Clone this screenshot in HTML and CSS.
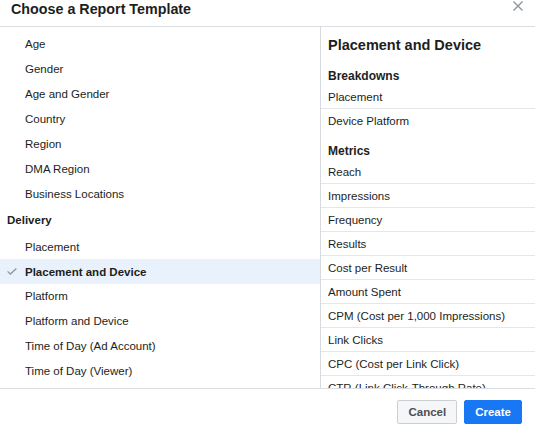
FILE: index.html
```html
<!DOCTYPE html>
<html>
<head>
<meta charset="utf-8">
<link rel="stylesheet" href="styles.css">
</head>
<body>
<div class="dialog">
  <header class="head">
    <h1 class="title">Choose a Report Template</h1>
    <span class="close"><svg width="10" height="10" viewBox="0 0 10 10"><path d="M0.5 0.5L9.5 9.5M9.5 0.5L0.5 9.5" stroke="#8d949e" stroke-width="1.4" fill="none"/></svg></span>
  </header>
  <div class="body">
    <div class="left">
      <div class="item">Age</div>
      <div class="item">Gender</div>
      <div class="item">Age and Gender</div>
      <div class="item">Country</div>
      <div class="item">Region</div>
      <div class="item">DMA Region</div>
      <div class="item">Business Locations</div>
      <div class="group">Delivery</div>
      <div class="item">Placement</div>
      <div class="item selected"><svg class="check" width="10" height="7" viewBox="0 0 10 7"><path d="M0.6 3.4L3.4 6.1L9.4 0.6" stroke="#8d949e" stroke-width="1.3" fill="none"/></svg>Placement and Device</div>
      <div class="item">Platform</div>
      <div class="item">Platform and Device</div>
      <div class="item">Time of Day (Ad Account)</div>
      <div class="item">Time of Day (Viewer)</div>
    </div>
    <div class="right">
      <h2 class="rtitle">Placement and Device</h2>
      <h3 class="sec">Breakdowns</h3>
      <div class="rows">
        <div class="row">Placement</div>
        <div class="row">Device Platform</div>
      </div>
      <h3 class="sec metrics">Metrics</h3>
      <div class="rows">
        <div class="row">Reach</div>
        <div class="row">Impressions</div>
        <div class="row">Frequency</div>
        <div class="row">Results</div>
        <div class="row">Cost per Result</div>
        <div class="row">Amount Spent</div>
        <div class="row">CPM (Cost per 1,000 Impressions)</div>
        <div class="row">Link Clicks</div>
        <div class="row">CPC (Cost per Link Click)</div>
        <div class="row">CTR (Link Click-Through Rate)</div>
      </div>
    </div>
  </div>
  <footer class="foot">
    <button class="btn cancel">Cancel</button>
    <button class="btn create">Create</button>
  </footer>
</div>
</body>
</html>
```
FILE: styles.css
```css
html, body {
  margin: 0;
  padding: 0;
  background: #ffffff;
}
body {
  font-family: "Liberation Sans", Arial, sans-serif;
  color: #1c1e21;
}
.dialog {
  width: 535px;
  height: 429px;
  display: flex;
  flex-direction: column;
  overflow: hidden;
}
.head {
  height: 26px;
  flex: none;
  display: flex;
  justify-content: space-between;
  align-items: flex-start;
  padding: 0 12px 0 11px;
  border-bottom: 1px solid #dadde1;
}
.title {
  margin: 0;
  font-size: 14.3px;
  line-height: 18px;
  font-weight: bold;
  color: #1c1e21;
}
.close {
  display: block;
  margin-top: 1px;
  line-height: 0;
}
.body {
  flex: 1;
  display: flex;
  min-height: 0;
}
.left {
  width: 320px;
  flex: none;
  border-right: 1px solid #d6d9dd;
  padding-top: 5px;
  overflow: hidden;
}
.item {
  height: 24.9px;
  display: flex;
  align-items: center;
  padding-left: 25px;
  font-size: 11.5px;
  color: #1c1e21;
}
.item.selected {
  padding-left: 7px;
  background: #e9f1fc;
  font-weight: bold;
}
.check {
  margin-right: 8px;
  margin-top: -1px;
}
.group {
  height: 28px;
  display: flex;
  align-items: center;
  padding-left: 7px;
  font-size: 11.5px;
  font-weight: bold;
}
.right {
  flex: 1;
  overflow: hidden;
  padding-top: 7px;
}
.rtitle {
  margin: 0;
  padding-left: 7px;
  font-size: 14.5px;
  line-height: 22px;
  font-weight: bold;
}
.sec {
  margin: 0;
  padding: 13px 0 2px 7px;
  font-size: 12px;
  line-height: 14px;
  font-weight: bold;
}
.sec.metrics {
  padding-top: 12px;
}
.row {
  height: 23px;
  display: flex;
  align-items: center;
  padding-left: 7px;
  font-size: 11.5px;
  color: #1c1e21;
}
.row + .row {
  border-top: 1px solid #e4e6e9;
}
.foot {
  flex: none;
  height: 41px;
  box-sizing: border-box;
  border-top: 1px solid #dadde1;
  display: flex;
  justify-content: flex-end;
  align-items: flex-start;
  gap: 7px;
  padding: 11px 13px 0 0;
}
.btn {
  height: 24px;
  display: inline-flex;
  align-items: center;
  padding: 0 10px;
  font-family: "Liberation Sans", Arial, sans-serif;
  font-size: 11.5px;
  line-height: 14px;
  font-weight: bold;
  border-radius: 2px;
  border: 1px solid;
  cursor: pointer;
}
.cancel {
  background: #f5f6f7;
  border-color: #ccd0d5;
  color: #4b4f56;
}
.create {
  background: #1877f2;
  border-color: #1877f2;
  color: #ffffff;
}
```
